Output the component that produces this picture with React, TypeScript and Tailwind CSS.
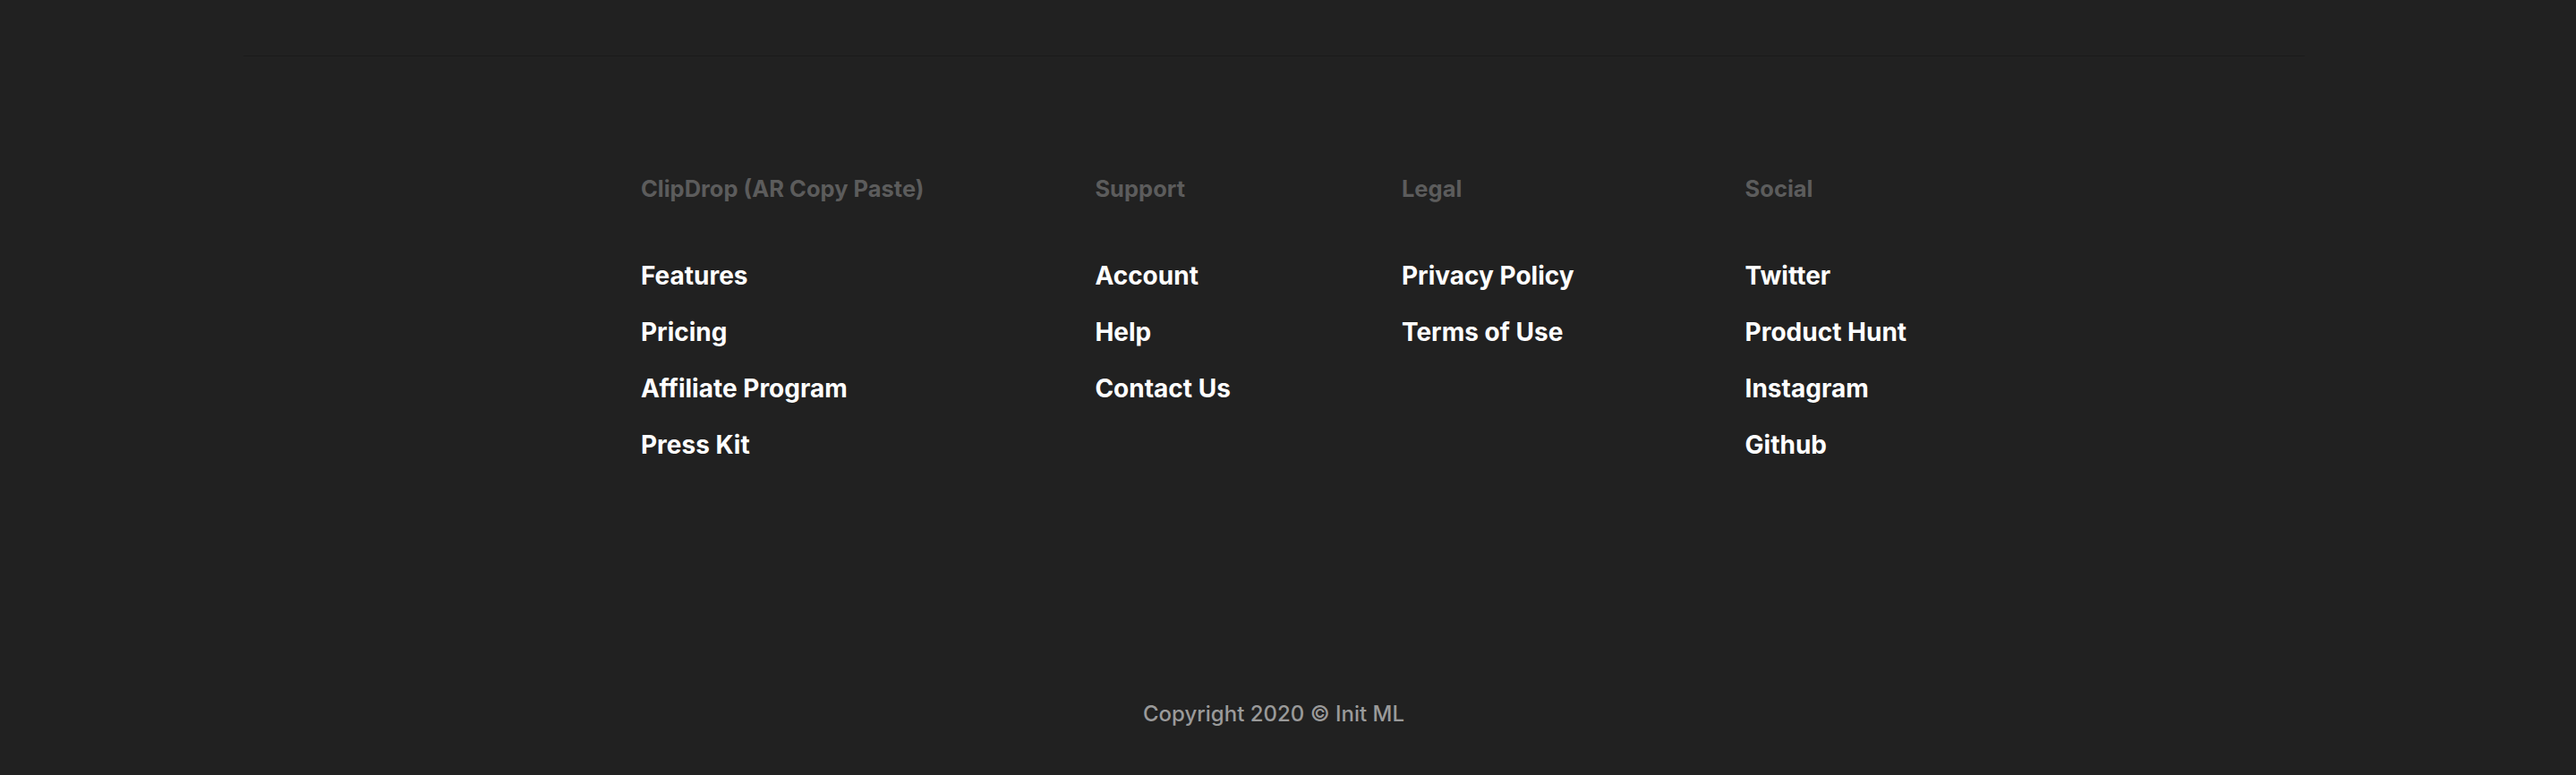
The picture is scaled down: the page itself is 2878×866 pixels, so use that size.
import React from 'react';

interface FooterColumn {
  title: string;
  links: string[];
}

const columns: FooterColumn[] = [
  { title: 'ClipDrop (AR Copy Paste)', links: ['Features', 'Pricing', 'Affiliate Program', 'Press Kit'] },
  { title: 'Support', links: ['Account', 'Help', 'Contact Us'] },
  { title: 'Legal', links: ['Privacy Policy', 'Terms of Use'] },
  { title: 'Social', links: ['Twitter', 'Product Hunt', 'Instagram', 'Github'] },
];

const App: React.FC = () => {
  return (
    <div
      className="min-h-[866px] w-full bg-[#212121] pr-[32px]"
      style={{ fontFamily: 'Inter, "Noto Sans", sans-serif' }}
    >
      <footer className="flex flex-col items-center pt-[62px] pb-[52px]">
        {/* separator */}
        <div className="h-px w-[2303px] bg-[#1a1a1a]" />

        {/* link columns */}
        <div className="mt-[130px] flex items-start justify-center gap-[191px]">
          {columns.map((col) => (
            <div key={col.title} className="flex flex-col">
              <h4 className="text-[25.5px] leading-[36px] font-bold text-[#5c5c5c]">{col.title}</h4>
              <ul className="mt-[61px] flex flex-col gap-[27px]">
                {col.links.map((link) => (
                  <li key={link}>
                    <a href="#" className="text-[28px] leading-[36px] font-bold text-white">
                      {link}
                    </a>
                  </li>
                ))}
              </ul>
            </div>
          ))}
        </div>

        {/* copyright */}
        <p className="mt-[267px] text-[24px] leading-[32px] font-medium text-[#9a9a9a]">
          Copyright 2020 © Init ML
        </p>
      </footer>
    </div>
  );
};

export default App;
